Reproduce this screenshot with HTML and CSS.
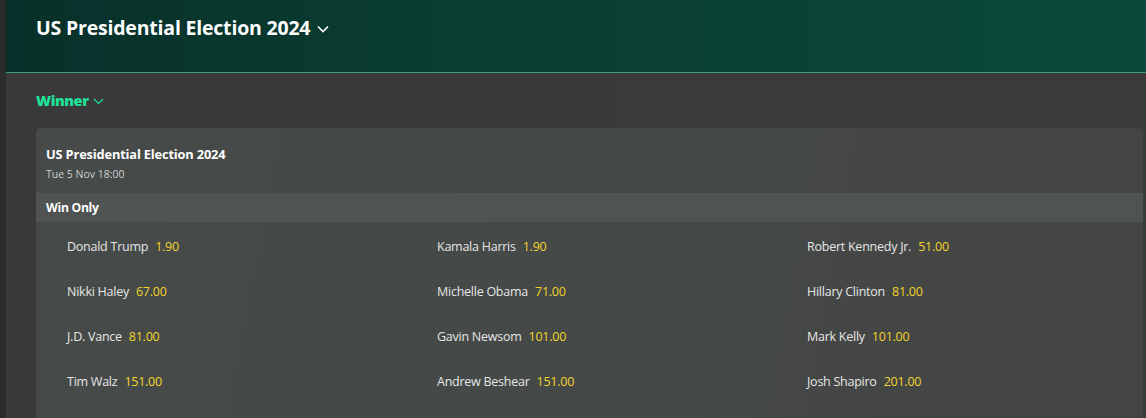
FILE: index.html
```html
<!DOCTYPE html>
<html>
<head>
<meta charset="utf-8">
<link rel="stylesheet" href="styles.css">
</head>
<body>
<div class="app">
  <div class="rail"></div>
  <main class="main">
    <header class="hero">
      <h1 class="hero-title">US Presidential Election 2024
        <svg class="chev-lg" width="12" height="8" viewBox="0 0 12 8"><path d="M1 1.5 L6 6.5 L11 1.5" fill="none" stroke="#fff" stroke-width="1.6"/></svg>
      </h1>
    </header>
    <section class="content">
      <div class="market-tab">Winner
        <svg class="chev-sm" width="11" height="7" viewBox="0 0 11 7"><path d="M1 1 L5.5 5.5 L10 1" fill="none" stroke="#1fe39a" stroke-width="1.2"/></svg>
      </div>
      <div class="card">
        <div class="card-head">
          <div class="event-name">US Presidential Election 2024</div>
          <div class="event-date">Tue 5 Nov 18:00</div>
        </div>
        <div class="bar">Win Only</div>
        <div class="grid">
          <div class="sel"><span class="name">Donald Trump</span><span class="odds">1.90</span></div>
          <div class="sel"><span class="name">Kamala Harris</span><span class="odds">1.90</span></div>
          <div class="sel"><span class="name">Robert Kennedy Jr.</span><span class="odds">51.00</span></div>
          <div class="sel"><span class="name">Nikki Haley</span><span class="odds">67.00</span></div>
          <div class="sel"><span class="name">Michelle Obama</span><span class="odds">71.00</span></div>
          <div class="sel"><span class="name">Hillary Clinton</span><span class="odds">81.00</span></div>
          <div class="sel"><span class="name">J.D. Vance</span><span class="odds">81.00</span></div>
          <div class="sel"><span class="name">Gavin Newsom</span><span class="odds">101.00</span></div>
          <div class="sel"><span class="name">Mark Kelly</span><span class="odds">101.00</span></div>
          <div class="sel"><span class="name">Tim Walz</span><span class="odds">151.00</span></div>
          <div class="sel"><span class="name">Andrew Beshear</span><span class="odds">151.00</span></div>
          <div class="sel"><span class="name">Josh Shapiro</span><span class="odds">201.00</span></div>
        </div>
      </div>
    </section>
  </main>
</div>
</body>
</html>
```

FILE: styles.css
```css
* { box-sizing: border-box; }
html, body { margin: 0; padding: 0; }
body {
  width: 1146px;
  height: 418px;
  overflow: hidden;
  background: #393939;
  font-family: "Open Sans", "Noto Sans", sans-serif;
  color: #fff;
}
.app { display: flex; height: 418px; }
.rail { width: 6px; flex: none; background: #2b2b2b; }
.main { flex: 1; display: flex; flex-direction: column; min-width: 0; }
.hero {
  height: 73px;
  flex: none;
  background: linear-gradient(90deg, #08302a 0%, #0a3d31 40%, #0b4a3a 100%);
  border-bottom: 1px solid #3f9f7c;
  padding: 14px 0 0 30px;
}
.hero-title {
  margin: 0;
  font-size: 19.5px;
  font-weight: 700;
  letter-spacing: -0.2px;
  line-height: 28px;
  display: flex;
  align-items: center;
  gap: 7px;
}
.chev-lg { margin-top: 1px; }
.content {
  flex: 1;
  background: linear-gradient(90deg, #393939, #3b3b3b);
  padding: 18px 3px 0 30px;
}
.market-tab {
  color: #1fe39a;
  font-size: 14.5px;
  font-weight: 800;
  letter-spacing: -0.4px;
  line-height: 20px;
  display: flex;
  align-items: center;
  gap: 4px;
  height: 20px;
}
.card {
  margin-top: 17px;
  background: linear-gradient(100deg, #464b49 0%, #444846 60%, #444444 100%);
  border-radius: 5px 5px 0 0;
  height: 300px;
}
.card-head { padding: 17px 10px 10px 10px; height: 65px; }
.event-name { font-size: 12.8px; font-weight: 700; line-height: 18px; letter-spacing: -0.15px; }
.event-date { font-size: 10.5px; color: #cfd1d0; line-height: 14px; margin-top: 4px; }
.bar {
  height: 29px;
  background: #4f5351;
  font-size: 12.2px;
  font-weight: 700;
  line-height: 30px;
  padding-left: 10px;
  letter-spacing: -0.3px;
}
.grid {
  display: grid;
  grid-template-columns: repeat(3, 370px);
  grid-auto-rows: 45px;
  padding: 16px 0 0 31px;
}
.sel { font-size: 12.5px; line-height: 18px; display: flex; gap: 7px; letter-spacing: -0.25px; }
.name { color: #e6e6e6; }
.odds { color: #f4d42a; }
```
